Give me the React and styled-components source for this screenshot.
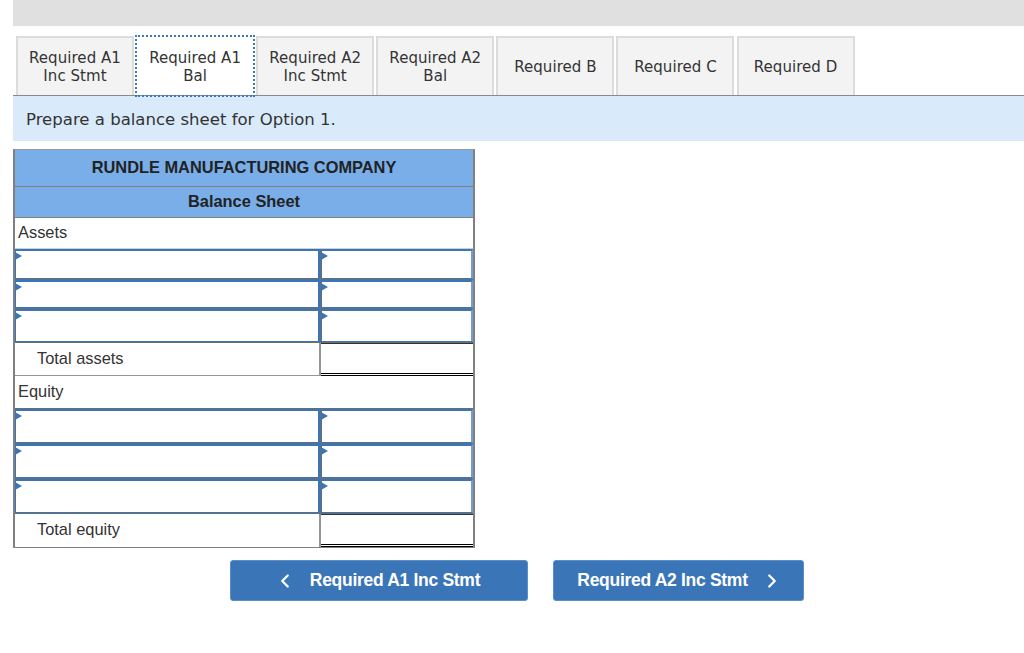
import React from "react";
import styled, { createGlobalStyle } from "styled-components";
import { ChevronLeft, ChevronRight } from "lucide-react";

const GlobalStyle = createGlobalStyle`
  html, body {
    margin: 0;
    padding: 0;
    background: #fff;
  }
  * {
    box-sizing: border-box;
  }
`;

const Page = styled.div`
  width: 1024px;
  height: 653px;
  padding-left: 13px;
  overflow: hidden;
  font-family: "Liberation Sans", Arial, sans-serif;
  color: #222;
`;

const TopBar = styled.div`
  height: 26px;
  background: #e0e0e0;
`;

const Tabs = styled.div`
  display: flex;
  gap: 2.1px;
  margin-top: 10px;
  padding-left: 3px;
  height: 59px;
`;

const Tab = styled.div`
  position: relative;
  width: 118px;
  display: flex;
  align-items: center;
  justify-content: center;
  text-align: center;
  font-family: "DejaVu Sans", Verdana, sans-serif;
  font-size: 15px;
  line-height: 18px;
  letter-spacing: 0.05px;
  color: #333;
  background: ${(p) => (p.$active ? "#fff" : "#f3f3f3")};
  border: 2px solid #dcdcdc;
  border-bottom: none;
  ${(p) => p.$active && "border-color: transparent;"}
  &::after {
    content: "";
    display: ${(p) => (p.$active ? "block" : "none")};
    position: absolute;
    top: -3px;
    left: -3px;
    right: -3px;
    bottom: -2px;
    border: 2px dotted #3b78c0;
  }
`;

const Info = styled.div`
  height: 46px;
  border-top: 1px solid #8a8a8a;
  background: #d9ebfa;
  padding: 1px 0 0 13px;
  display: flex;
  align-items: center;
  font-family: "DejaVu Sans", Verdana, sans-serif;
  font-size: 16.55px;
  color: #333;
`;

const Sheet = styled.div`
  width: 462px;
  margin-top: 8px;
  border: 1px solid #808080;
  border-left-width: 2px;
  border-right-width: 2px;
  border-top-color: #999;
`;

const Banner = styled.div`
  height: ${(p) => p.$h}px;
  background: #79aee8;
  border-bottom: 1px solid #808080;
  padding-bottom: 2px;
  display: flex;
  align-items: center;
  justify-content: center;
  font-size: 16.4px;
  font-weight: bold;
  color: #222;
`;

const Section = styled.div`
  height: ${(p) => p.$h}px;
  display: flex;
  align-items: center;
  padding: 0 0 1px 3px;
  font-size: 16.4px;
  color: #333;
  border-bottom: 1px solid ${(p) => p.$line || "#d0d0d0"};
`;

const Row = styled.div`
  height: ${(p) => p.$h}px;
  display: grid;
  grid-template-columns: ${(p) => (p.$total ? "306px" : "305px")} 1fr;
  background: #6d6d6d;
`;

const Field = styled.div`
  position: relative;
  border-style: solid;
  border-color: #3a75b8;
  border-width: 2px 2px 1px 1px;
  border-right-color: ${(p) => (p.$wide ? "#3a75b8" : "#6f9fd6")};
  margin: 0 0 1px ${(p) => (p.$wide ? "0" : "1px")};
  background: #fff;
  &::before {
    content: "";
    position: absolute;
    top: 1px;
    left: -1px;
    border-left: 7px solid #3a75b8;
    border-top: 4.5px solid transparent;
    border-bottom: 4.5px solid transparent;
  }
`;

const TotalLabel = styled.div`
  display: flex;
  align-items: center;
  padding: 0 0 ${(p) => (p.$last ? "2px" : "1px")} 22px;
  font-size: 16.4px;
  color: #333;
  background: #fff;
  border-right: 2px solid #969696;
  border-bottom: ${(p) => (p.$last ? "0" : "1px solid #969696")};
`;

const TotalValue = styled.div`
  background: #fff;
  border-top: 1px solid #333;
  border-bottom: 3px double #000;
`;

const Nav = styled.div`
  display: flex;
  gap: 25px;
  margin: 12px 0 0 217px;
`;

const NavButton = styled.button`
  width: ${(p) => p.$w}px;
  height: 41px;
  border: 1px solid #5a8fca;
  border-radius: 3px;
  background: #3a75b8;
  color: #fff;
  display: flex;
  align-items: center;
  justify-content: center;
  gap: ${(p) => p.$gap}px;
  padding: ${(p) => p.$pad};
  font-family: "Liberation Sans", Arial, sans-serif;
  font-size: 17.5px;
  font-weight: bold;
  letter-spacing: -0.3px;
`;

const tabs = [
  ["Required A1", "Inc Stmt"],
  ["Required A1", "Bal"],
  ["Required A2", "Inc Stmt"],
  ["Required A2", "Bal"],
  ["Required B"],
  ["Required C"],
  ["Required D"],
];

function InputRow({ h }) {
  return (
    <Row $h={h}>
      <Field $wide />
      <Field />
    </Row>
  );
}

function TotalRow({ h, label, last }) {
  return (
    <Row $h={h} $total>
      <TotalLabel $last={last}>{label}</TotalLabel>
      <TotalValue />
    </Row>
  );
}

export default function App() {
  return (
    <>
      <GlobalStyle />
      <Page>
        <TopBar />
        <Tabs>
          {tabs.map((t, i) => (
            <Tab key={i} $active={i === 1}>
              <span>
                {t[0]}
                {t[1] && <br />}
                {t[1]}
              </span>
            </Tab>
          ))}
        </Tabs>
        <Info>Prepare a balance sheet for Option 1.</Info>
        <Sheet>
          <Banner $h={37}>RUNDLE MANUFACTURING COMPANY</Banner>
          <Banner $h={31}>Balance Sheet</Banner>
          <Section $h={31}>Assets</Section>
          <InputRow h={31} />
          <InputRow h={29} />
          <InputRow h={34} />
          <TotalRow h={33} label="Total assets" />
          <Section $h={33} $line="#6d6d6d">Equity</Section>
          <InputRow h={35} />
          <InputRow h={35} />
          <InputRow h={35} />
          <TotalRow h={33} label="Total equity" last />
        </Sheet>
        <Nav>
          <NavButton $w={298} $gap={14} $pad="0 4px 0 0">
            <ChevronLeft size={22} strokeWidth={2.5} />
            Required A1 Inc Stmt
          </NavButton>
          <NavButton $w={251} $gap={13} $pad="0 0 0 3px">
            Required A2 Inc Stmt
            <ChevronRight size={22} strokeWidth={2.5} />
          </NavButton>
        </Nav>
      </Page>
    </>
  );
}
